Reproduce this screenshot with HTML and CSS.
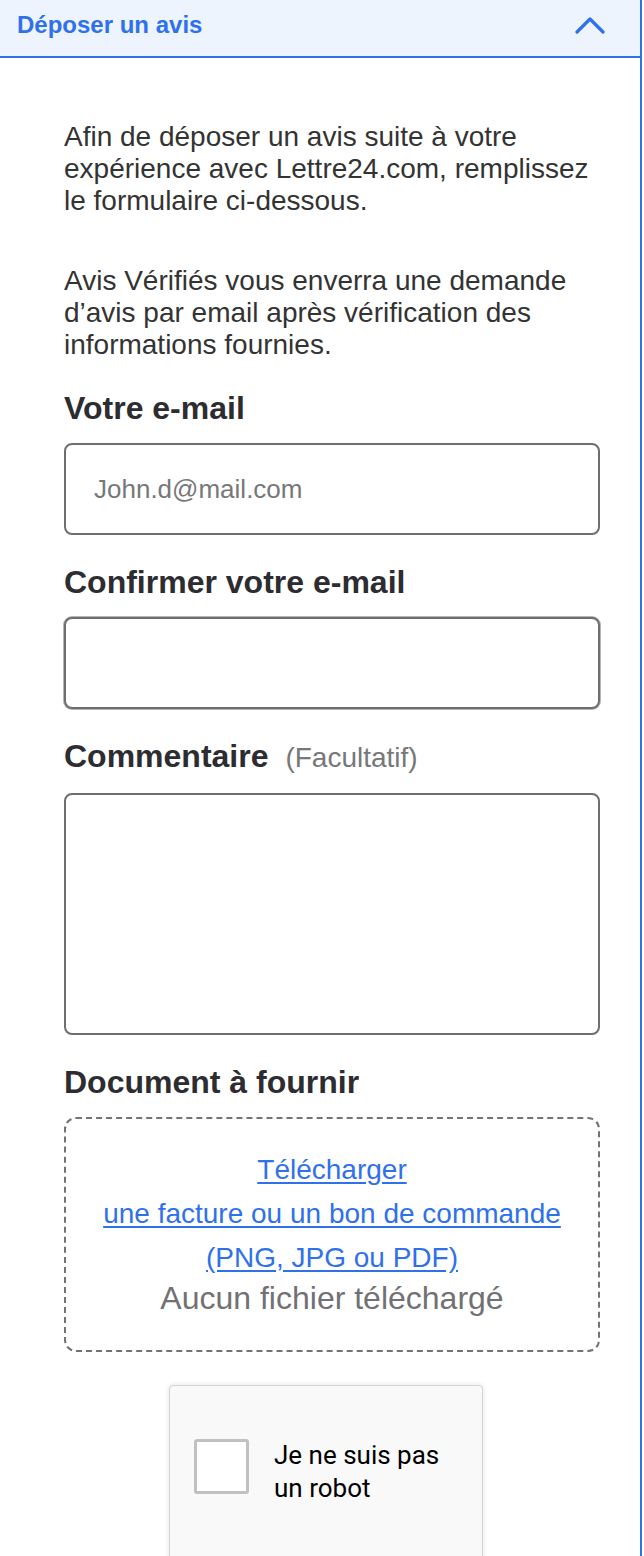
FILE: index.html
```html
<!DOCTYPE html>
<html lang="fr">
<head>
    <meta charset="UTF-8">
    <meta name="viewport" content="width=device-width, initial-scale=1.0">
    <title>Déposer un avis</title>
    <link rel="stylesheet" href="styles.css">
</head>
<body>
    <div class="panel">
        <div class="panel-header">
            <span class="panel-title">Déposer un avis</span>
            <svg class="chevron" width="30" height="18" viewBox="0 0 30 18">
                <path d="M2 16 L15 3 L28 16" fill="none" stroke="#2f71ea" stroke-width="3.2" stroke-linecap="round" stroke-linejoin="round"/>
            </svg>
        </div>

        <div class="panel-body">
            <p class="intro">Afin de déposer un avis suite à votre expérience avec Lettre24.com, remplissez le formulaire ci-dessous.</p>
            <p class="intro">Avis Vérifiés vous enverra une demande d’avis par email après vérification des informations fournies.</p>

            <div class="field">
                <label for="email">Votre e-mail</label>
                <input type="email" id="email" class="text-input" placeholder="John.d@mail.com">
            </div>

            <div class="field">
                <label for="emailConfirm">Confirmer votre e-mail</label>
                <input type="email" id="emailConfirm" class="text-input focused">
            </div>

            <div class="field">
                <label for="comment">Commentaire <span class="optional">(Facultatif)</span></label>
                <textarea id="comment" class="text-area"></textarea>
            </div>

            <div class="field">
                <label>Document à fournir</label>
                <div class="upload">
                    <a href="#" class="upload-link">Télécharger<br>une facture ou un bon de commande<br>(PNG, JPG ou PDF)</a>
                    <div class="upload-status">Aucun fichier téléchargé</div>
                </div>
            </div>

            <div class="captcha">
                <div class="captcha-row">
                    <span class="captcha-box"></span>
                    <span class="captcha-text">Je ne suis pas un robot</span>
                </div>
            </div>
        </div>
    </div>
</body>
</html>
```

FILE: styles.css
```css
html, body {
    margin: 0;
    overflow: hidden;
}
body {
    font-family: "Liberation Sans", Arial, sans-serif;
    color: #303033;
    background: #fff;
}
.panel {
    width: 642px;
    min-height: 1556px;
    box-sizing: border-box;
    border-right: 2px solid #2f71ea;
}
.panel-header {
    height: 58px;
    box-sizing: border-box;
    border-bottom: 2px solid #2f71ea;
    background-color: #edf4fe;
    padding: 0 35px 6px 17px;
    display: flex;
    align-items: center;
    justify-content: space-between;
}
.panel-title {
    color: #2f71ea;
    font-size: 24px;
    font-weight: bold;
}
.chevron {
    display: block;
}
.panel-body {
    padding: 63px 40px 0 64px;
}
.intro {
    margin: 0 0 48px;
    font-size: 28px;
    line-height: 32px;
    color: #333;
}
.intro + .intro {
    margin-bottom: 0;
}
.field {
    margin-top: 27px;
}
.field label {
    display: block;
    font-size: 32px;
    line-height: 40px;
    font-weight: bold;
    color: #2c2c31;
    margin-bottom: 15px;
}
.optional {
    font-weight: normal;
    font-size: 28px;
    color: #77777a;
    margin-left: 8px;
}
.text-input, .text-area {
    display: block;
    width: 100%;
    box-sizing: border-box;
    border: 2px solid #6e6e72;
    border-radius: 8px;
    background: #fff;
    font-family: "Liberation Sans", Arial, sans-serif;
    font-size: 26px;
    margin: 0;
}
.text-input {
    height: 92px;
    padding: 0 28px;
}
.text-input::placeholder {
    color: #77777a;
}
.text-input.focused {
    box-shadow: 0 0 0 1px #b5b5b8;
}
.text-area {
    height: 242px;
    resize: none;
    padding: 16px 28px;
}
.upload {
    border: 2px dashed #737376;
    border-radius: 12px;
    padding: 29px 0 34px;
    text-align: center;
}
.upload-link {
    display: block;
    color: #2f71ea;
    font-size: 28px;
    line-height: 44px;
    text-decoration: underline;
    text-underline-offset: 3px;
}
.upload-status {
    color: #717174;
    font-size: 32px;
    line-height: 36px;
}
.captcha {
    width: 314px;
    height: 272px;
    box-sizing: border-box;
    margin: 33px 0 0 105px;
    background: #f9f9f9;
    border: 1px solid #d3d3d3;
    border-radius: 4px;
    box-shadow: 0 0 4px 1px rgba(0, 0, 0, 0.08);
    padding: 53px 20px 0 24px;
}
.captcha-row {
    display: flex;
    gap: 25px;
    align-items: flex-start;
}
.captcha-box {
    flex: none;
    width: 55px;
    height: 55px;
    box-sizing: border-box;
    border: 3px solid #c1c1c1;
    border-radius: 3px;
    background: #fff;
}
.captcha-text {
    font-family: Roboto, "Liberation Sans", sans-serif;
    font-size: 26px;
    line-height: 33px;
    color: #000;
}
```
